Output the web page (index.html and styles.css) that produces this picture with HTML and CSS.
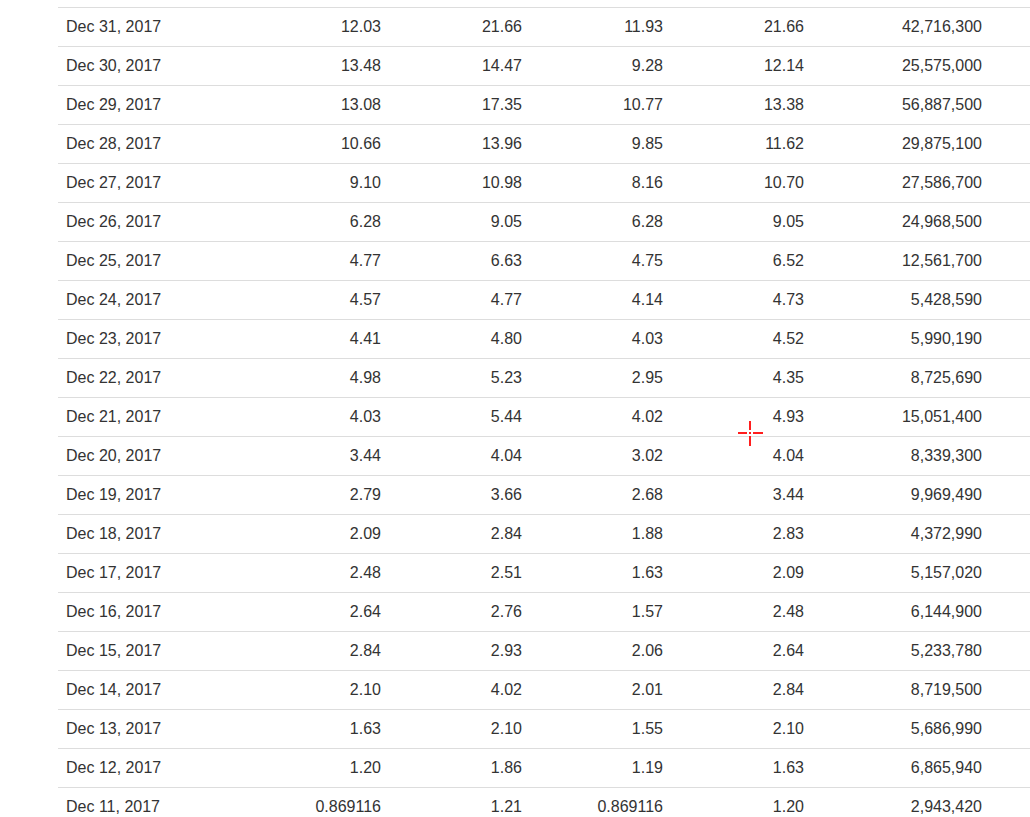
FILE: index.html
```html
<!DOCTYPE html>
<html lang="en">
<head>
    <meta charset="UTF-8">
    <meta name="viewport" content="width=device-width, initial-scale=1.0">
    <title>Historical Data</title>
    <link rel="stylesheet" href="styles.css">
</head>
<body>
    <div class="page">
        <table class="history">
            <tbody>
                <tr><td>Dec 31, 2017</td><td>12.03</td><td>21.66</td><td>11.93</td><td>21.66</td><td>42,716,300</td></tr>
                <tr><td>Dec 30, 2017</td><td>13.48</td><td>14.47</td><td>9.28</td><td>12.14</td><td>25,575,000</td></tr>
                <tr><td>Dec 29, 2017</td><td>13.08</td><td>17.35</td><td>10.77</td><td>13.38</td><td>56,887,500</td></tr>
                <tr><td>Dec 28, 2017</td><td>10.66</td><td>13.96</td><td>9.85</td><td>11.62</td><td>29,875,100</td></tr>
                <tr><td>Dec 27, 2017</td><td>9.10</td><td>10.98</td><td>8.16</td><td>10.70</td><td>27,586,700</td></tr>
                <tr><td>Dec 26, 2017</td><td>6.28</td><td>9.05</td><td>6.28</td><td>9.05</td><td>24,968,500</td></tr>
                <tr><td>Dec 25, 2017</td><td>4.77</td><td>6.63</td><td>4.75</td><td>6.52</td><td>12,561,700</td></tr>
                <tr><td>Dec 24, 2017</td><td>4.57</td><td>4.77</td><td>4.14</td><td>4.73</td><td>5,428,590</td></tr>
                <tr><td>Dec 23, 2017</td><td>4.41</td><td>4.80</td><td>4.03</td><td>4.52</td><td>5,990,190</td></tr>
                <tr><td>Dec 22, 2017</td><td>4.98</td><td>5.23</td><td>2.95</td><td>4.35</td><td>8,725,690</td></tr>
                <tr><td>Dec 21, 2017</td><td>4.03</td><td>5.44</td><td>4.02</td><td>4.93</td><td>15,051,400</td></tr>
                <tr><td>Dec 20, 2017</td><td>3.44</td><td>4.04</td><td>3.02</td><td>4.04</td><td>8,339,300</td></tr>
                <tr><td>Dec 19, 2017</td><td>2.79</td><td>3.66</td><td>2.68</td><td>3.44</td><td>9,969,490</td></tr>
                <tr><td>Dec 18, 2017</td><td>2.09</td><td>2.84</td><td>1.88</td><td>2.83</td><td>4,372,990</td></tr>
                <tr><td>Dec 17, 2017</td><td>2.48</td><td>2.51</td><td>1.63</td><td>2.09</td><td>5,157,020</td></tr>
                <tr><td>Dec 16, 2017</td><td>2.64</td><td>2.76</td><td>1.57</td><td>2.48</td><td>6,144,900</td></tr>
                <tr><td>Dec 15, 2017</td><td>2.84</td><td>2.93</td><td>2.06</td><td>2.64</td><td>5,233,780</td></tr>
                <tr><td>Dec 14, 2017</td><td>2.10</td><td>4.02</td><td>2.01</td><td>2.84</td><td>8,719,500</td></tr>
                <tr><td>Dec 13, 2017</td><td>1.63</td><td>2.10</td><td>1.55</td><td>2.10</td><td>5,686,990</td></tr>
                <tr><td>Dec 12, 2017</td><td>1.20</td><td>1.86</td><td>1.19</td><td>1.63</td><td>6,865,940</td></tr>
                <tr><td>Dec 11, 2017</td><td>0.869116</td><td>1.21</td><td>0.869116</td><td>1.20</td><td>2,943,420</td></tr>
            </tbody>
        </table>

        <svg class="cursor" width="25" height="25" viewBox="0 0 25 25">
            <path d="M0 12h9M15 12h10M12 0v9M12 15v10M11 12h2" stroke="#ff1e1e" stroke-width="2" fill="none"/>
        </svg>
    </div>
</body>
</html>
```

FILE: styles.css
```css
body {
    margin: 0;
    padding: 0;
    background: #ffffff;
    color: #333;
    font-family: "Liberation Sans", Arial, sans-serif;
    font-size: 16px;
}
.page {
    position: relative;
    height: 817px;
    overflow: hidden;
    padding: 7px 0 0 58px;
    box-sizing: border-box;
}
.history {
    border-collapse: collapse;
    width: 972px;
}
.history td {
    width: 125px;
    padding: 8px;
    line-height: 22px;
    border-top: 1px solid #ddd;
    text-align: right;
    white-space: nowrap;
}
.history td:first-child {
    width: 174px;
    text-align: left;
}
.history td:last-child {
    width: 162px;
    padding-right: 48px;
}
.cursor {
    position: absolute;
    left: 738px;
    top: 421px;
}
```
